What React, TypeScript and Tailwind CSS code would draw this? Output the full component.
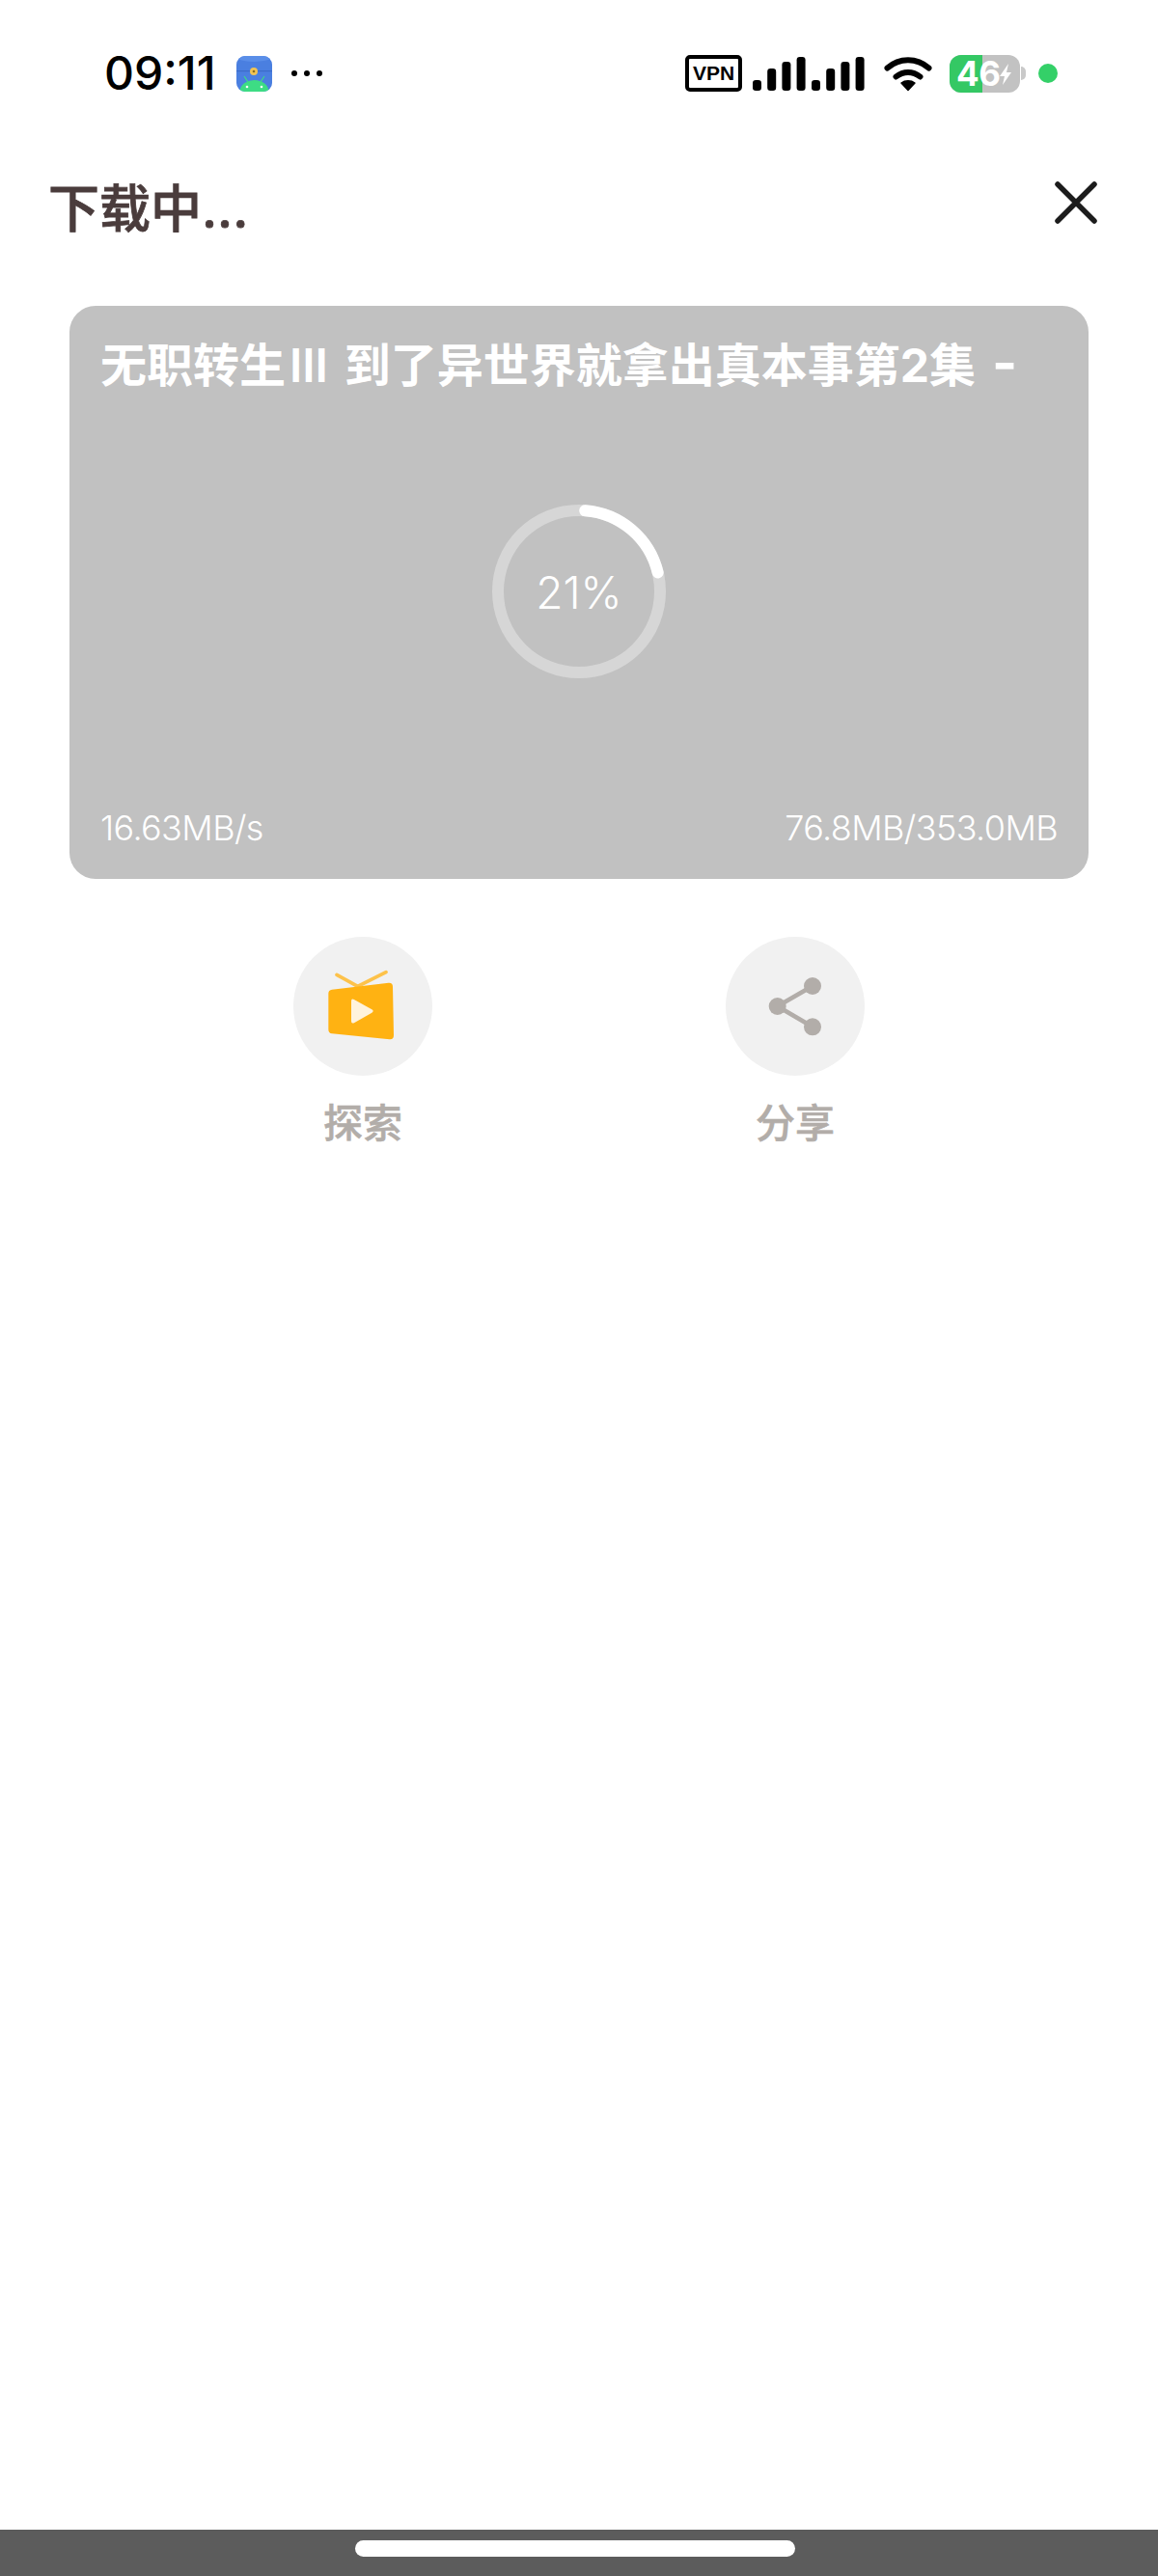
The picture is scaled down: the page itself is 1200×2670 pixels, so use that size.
const cjk = "font-['Inter','Noto_Sans_CJK_SC',sans-serif]";

function AppIcon() {
  return (
    <svg width="37" height="37" viewBox="0 0 37 37">
      <defs>
        <clipPath id="app"><rect width="37" height="37" rx="9" /></clipPath>
      </defs>
      <g clipPath="url(#app)">
        <rect width="37" height="37" fill="#4a7fe0" />
        <path d="M0 3Q18 9 37 3V0H0Z" fill="#5a8ee8" />
        <rect y="15" width="37" height="1.2" fill="#3c6cc8" />
        <path d="M8 21l4 6M29 21l-4 6" stroke="#3ddc84" strokeWidth="1.2" />
        <ellipse cx="18.5" cy="37" rx="15" ry="12" fill="#3ddc84" />
        <circle cx="11" cy="32" r="1.3" fill="#fff" />
        <circle cx="26" cy="32" r="1.3" fill="#fff" />
        <circle cx="18" cy="16" r="4" fill="#f1c453" />
        <circle cx="18" cy="16" r="1.3" fill="#8a6d1f" />
      </g>
    </svg>
  );
}

function Signal() {
  const heights = [11, 23, 30, 35];
  return (
    <svg width="116" height="36" viewBox="0 0 116 36" fill="#000">
      {[0, 1].map((g) =>
        heights.map((h, i) => (
          <rect key={`${g}-${i}`} x={g * 61 + i * 15.2} y={36 - h} width="9" height={h} rx="3.2" />
        )),
      )}
    </svg>
  );
}

function Wifi() {
  return (
    <svg width="50" height="38" viewBox="0 0 50 38" fill="none" stroke="#000" strokeWidth="6" strokeLinecap="round">
      <path d="M3.5 13.5C16 2.5 34 2.5 46.5 13.5" />
      <path d="M12.5 22.5C20 16.5 30 16.5 37.5 22.5" />
      <path d="M25 36.5l-7-7.5c4-3 10-3 14 0z" fill="#000" stroke="#000" strokeWidth="1.5" strokeLinejoin="round" />
    </svg>
  );
}

function Battery() {
  return (
    <div className="relative flex items-center h-[39px] w-[80px]">
      <div className="relative w-[73px] h-[39px] rounded-[12px] overflow-hidden bg-[#c2c2c2]">
        <div className="h-full w-[34px] bg-[#34c864]" />
      </div>
      <div className="w-[5px] h-[14px] rounded-r-full bg-[#c9c9c9] ml-[1px]" />
      <span className="absolute left-[7px] top-0 h-[39px] leading-[39px] text-[35px] font-bold text-white font-['Inter',sans-serif] tracking-[-0.5px]">
        46
      </span>
      <svg className="absolute left-[50px] top-[8px]" width="16" height="24" viewBox="0 0 16 24" fill="#fff">
        <path d="M11 1L2 14h5l-2 9 9-13H9z" />
      </svg>
    </div>
  );
}

function StatusBar() {
  return (
    <div className="h-[150px] pt-[56px] pl-[108px] pr-[104px] flex items-start justify-between">
      <div className="flex items-center h-[40px]">
        <span className="text-[48px] leading-[40px] font-medium text-black font-['Inter',sans-serif] w-[137px]">09:11</span>
        <AppIcon />
        <div className="flex items-center gap-[7px] ml-[20px]">
          <span className="w-[6px] h-[6px] rounded-full bg-black" />
          <span className="w-[6px] h-[6px] rounded-full bg-black" />
          <span className="w-[6px] h-[6px] rounded-full bg-black" />
        </div>
      </div>
      <div className="flex items-center h-[40px]">
        <div className="w-[59px] h-[38px] border-[4px] border-black rounded-[5px] flex items-center justify-center text-[21px] font-bold text-black font-['Liberation_Sans',sans-serif]">
          VPN
        </div>
        <div className="ml-[11px]"><Signal /></div>
        <div className="ml-[20px]"><Wifi /></div>
        <div className="ml-[18px]"><Battery /></div>
        <span className="ml-[12px] w-[20px] h-[20px] rounded-full bg-[#34d068]" />
      </div>
    </div>
  );
}

function Ring() {
  const r = 84;
  const c = 2 * Math.PI * r;
  return (
    <div className="relative w-[180px] h-[180px]">
      <svg width="180" height="180" viewBox="0 0 180 180" className="-rotate-90">
        <circle cx="90" cy="90" r={r} fill="none" stroke="#d6d6d6" strokeWidth="12" />
        <circle
          cx="90"
          cy="90"
          r={r}
          fill="none"
          stroke="#fff"
          strokeWidth="12"
          strokeLinecap="round"
          strokeDasharray={`${c * 0.2} ${c}`}
          strokeDashoffset={-c * 0.012}
        />
      </svg>
      <div className="absolute inset-0 pt-[3px] flex items-center justify-center text-[46px] font-light text-white font-['Inter',sans-serif]">
        21%
      </div>
    </div>
  );
}

function TvIcon() {
  return (
    <svg width="144" height="144" viewBox="72 62 432 432">
      <path d="M207 180L272 216L360 172" fill="none" stroke="#fdc24a" strokeWidth="11" strokeLinecap="round" strokeLinejoin="round" />
      <path
        d="M192 226L368 205Q381 204 381 217L384 368Q384 382 371 381L192 363Q181 362 181 350L181 238Q181 227 192 226Z"
        fill="#ffb212"
      />
      <path d="M252 262Q252 252 262 258L316 288Q324 293 316 298L262 329Q252 334 252 324Z" fill="#fff3dc" />
    </svg>
  );
}

function ShareIcon() {
  return (
    <svg width="144" height="144" viewBox="66 62 432 432" fill="#b2ada9">
      <path d="M336 215L227 278L336 342" fill="none" stroke="#b2ada9" strokeWidth="14" />
      <circle cx="336" cy="215" r="27" />
      <circle cx="227" cy="278" r="27" />
      <circle cx="336" cy="342" r="27" />
    </svg>
  );
}

function Action({ label, children }: { label: string; children: React.ReactNode }) {
  return (
    <div className="w-[144px] flex flex-col items-center">
      <div className="w-[144px] h-[144px] rounded-full bg-[#f1f1f1] flex items-center justify-center">{children}</div>
      <div className={`mt-[24px] text-[41px] leading-[50px] font-medium [-webkit-text-stroke:0.6px_#b2ada9] text-[#b2ada9] ${cjk}`}>{label}</div>
    </div>
  );
}

export default function App() {
  return (
    <div className="w-[1200px] h-[2670px] bg-white flex flex-col overflow-hidden">
      <StatusBar />
      <div className="flex-1">
        <div className="flex items-start justify-between pl-[50px] pr-[63px] h-[167px]">
          <div className={`text-[53px] leading-[68px] mt-[33px] font-medium [-webkit-text-stroke:0.8px_#4a3c3c] text-[#4a3c3c] ${cjk}`}>下载中...</div>
          <svg width="44" height="44" viewBox="0 0 44 44" className="mt-[38px]" stroke="#1c1c1c" strokeWidth="5.5" strokeLinecap="round">
            <path d="M3 3L41 41M41 3L3 41" />
          </svg>
        </div>
        <div className="mx-[72px] h-[594px] rounded-[27px] bg-[#c1c1c1] px-[32px] flex flex-col">
          <div className={`mt-[31px] h-[60px] leading-[60px] text-[48px] font-bold text-white whitespace-nowrap ${cjk}`}>
            无职转生<span className="ml-[4px] mr-[17px] font-semibold">Ⅲ</span>到了异世界就拿出真本事第2集<span className="ml-[17px] text-[56px] leading-none">-</span>
          </div>
          <div className="mt-[115px] flex justify-center"><Ring /></div>
          <div className="mt-auto mb-[30px] flex justify-between text-[36px] leading-[46px] font-light tracking-[-0.6px] text-white font-['Inter',sans-serif]">
            <span>16.63MB/s</span>
            <span>76.8MB/353.0MB</span>
          </div>
        </div>
        <div className="mt-[60px] flex justify-center gap-[304px]">
          <Action label="探索"><TvIcon /></Action>
          <Action label="分享"><ShareIcon /></Action>
        </div>
      </div>
      <div className="h-[48px] bg-[#5c5c5c] flex justify-center pt-[11px] pr-[8px]">
        <div className="w-[456px] h-[17px] rounded-full bg-white" />
      </div>
    </div>
  );
}
